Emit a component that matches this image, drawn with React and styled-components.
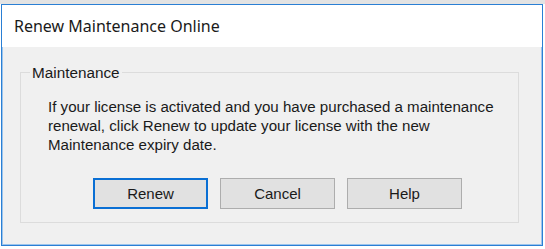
import React from 'react';
import styled, { createGlobalStyle } from 'styled-components';

const Global = createGlobalStyle`
  html, body {
    margin: 0;
    padding: 0;
    background: #ffffff;
  }
  body {
    width: 545px;
    height: 249px;
    overflow: hidden;
    font-family: "Liberation Sans", Arial, sans-serif;
  }
`;

const Page = styled.div`
  width: 545px;
  height: 249px;
  background: linear-gradient(to bottom, #e3e3e3 0, #e3e3e3 4px, #ffffff 4px);
  padding: 4px 2px 0 1px;
  box-sizing: border-box;
`;

const Window = styled.div`
  width: 542px;
  height: 242px;
  box-sizing: border-box;
  border: 1px solid #2a7fd4;
  box-shadow: inset 1px 0 0 #9cc4ec, inset -1px 0 0 #9cc4ec, inset 0 -1px 0 #9cc4ec;
  display: flex;
  flex-direction: column;
  background: #f0f0f0;
`;

const TitleBar = styled.div`
  height: 42px;
  background: #ffffff;
  display: flex;
  align-items: center;
  padding-left: 12px;
  padding-bottom: 1px;
  box-sizing: border-box;
  font-family: "Noto Sans", "Open Sans", sans-serif;
  font-size: 16px;
  color: #1a1a1a;
`;

const Body = styled.div`
  flex: 1;
  padding: 17px 0 0 18px;
`;

const GroupBox = styled.fieldset`
  margin: 0;
  width: 499px;
  height: 159px;
  box-sizing: border-box;
  border: 1px solid #dcdcdc;
  padding: 16px 0 0 27px;
  display: flex;
  flex-direction: column;
`;

const Legend = styled.legend`
  padding: 0 2px;
  margin-left: -18px;
  font-size: 15.3px;
  line-height: 17px;
  color: #1a1a1a;
`;

const Message = styled.p`
  margin: 0;
  font-size: 15.1px;
  line-height: 19px;
  color: #1a1a1a;
  width: 452px;
`;

const Buttons = styled.div`
  display: flex;
  gap: 12px;
  margin-top: 24px;
  padding-left: 45px;
`;

const Button = styled.button`
  width: 115px;
  height: 31px;
  box-sizing: border-box;
  background: #e1e1e1;
  border: ${p => (p.$default ? '2px solid #0a6fd4' : '1px solid #adadad')};
  font-family: "Liberation Sans", Arial, sans-serif;
  font-size: 15px;
  color: #1a1a1a;
  padding: 0;
`;

export default function App() {
  return (
    <>
      <Global />
      <Page>
        <Window>
          <TitleBar>Renew Maintenance Online</TitleBar>
          <Body>
            <GroupBox>
              <Legend>Maintenance</Legend>
              <Message>
                If your license is activated and you have purchased a maintenance
                renewal, click Renew to update your license with the new
                Maintenance expiry date.
              </Message>
              <Buttons>
                <Button $default>Renew</Button>
                <Button>Cancel</Button>
                <Button>Help</Button>
              </Buttons>
            </GroupBox>
          </Body>
        </Window>
      </Page>
    </>
  );
}
